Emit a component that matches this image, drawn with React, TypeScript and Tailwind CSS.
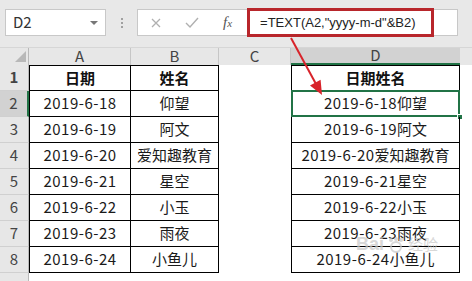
import React from 'react';

const rows: [string, string][] = [
  ['2019-6-18', '仰望'],
  ['2019-6-19', '阿文'],
  ['2019-6-20', '爱知趣教育'],
  ['2019-6-21', '星空'],
  ['2019-6-22', '小玉'],
  ['2019-6-23', '雨夜'],
  ['2019-6-24', '小鱼儿'],
];

const cellFont = { fontFamily: '"Noto Sans CJK SC", "Noto Sans", sans-serif' };
const uiFont = { fontFamily: '"Liberation Sans", Arial, sans-serif' };

function RowHeader({ n, selected }: { n: number; selected?: boolean }) {
  return (
    <div
      className={`flex w-[29px] shrink-0 items-center justify-center border-b border-[#d0d0d0] text-[15px] text-[#444] ${
        selected ? 'border-r-2 border-r-[#217346] bg-[#d2d2d2]' : 'border-r border-r-[#b9b9b9] bg-[#e7e7e7]'
      }`}
      style={cellFont}
    >
      {n}
    </div>
  );
}

export default function App() {
  return (
    <div className="relative h-[281px] w-[472px] overflow-hidden bg-white">
      {/* Name box + formula bar */}
      <div className="flex h-[47px] items-start bg-[#e8e8e8] pt-[9px]">
        <div className="ml-[5px] flex h-[27px] w-[101px] items-center justify-between border border-[#c8c8c8] bg-white pl-[7px] pr-[7px]">
          <span className="text-[15px] text-[#333]" style={cellFont}>D2</span>
          <svg width="8" height="4" viewBox="0 0 8 4">
            <path d="M0 0h8L4 4z" fill="#777" />
          </svg>
        </div>
        <div className="flex h-[27px] w-[31px] flex-col items-center justify-center gap-[2px]">
          <span className="h-[2px] w-[2px] bg-[#a0a0a0]" />
          <span className="h-[2px] w-[2px] bg-[#a0a0a0]" />
          <span className="h-[2px] w-[2px] bg-[#a0a0a0]" />
        </div>
        <div className="flex h-[27px] w-[321px] items-center border border-[#c8c8c8] bg-white">
          <svg className="ml-[13px]" width="10" height="10" viewBox="0 0 10 10">
            <path d="M1 1l8 8M9 1l-8 8" stroke="#b0b0b0" strokeWidth="1.3" />
          </svg>
          <svg className="ml-[24px]" width="14" height="11" viewBox="0 0 14 11">
            <path d="M1 6l4 4 8-9" stroke="#b0b0b0" strokeWidth="1.4" fill="none" />
          </svg>
          <span className="ml-[24px] text-[15px] italic text-[#555]" style={{ fontFamily: '"Liberation Serif", serif' }}>
            f<span className="text-[11px]">x</span>
          </span>
          <div className="ml-[15px] flex h-[29px] w-[187px] shrink-0 items-center border-[3px] border-[#b8262b] bg-white pl-[10px]">
            <span className="text-[13px] text-[#222]" style={uiFont}>
              =TEXT(A2,"yyyy-m-d"&amp;B2)
            </span>
          </div>
        </div>
      </div>

      {/* Column headers */}
      <div className="flex h-[18px] border-t border-[#d6d6d6] bg-[#e7e7e7] text-[15px] text-[#444]" style={cellFont}>
        <div className="relative w-[29px] shrink-0 border-r border-[#b9b9b9]">
          <svg className="absolute left-[15px] top-[3px]" width="11" height="11" viewBox="0 0 11 11">
            <path d="M11 0v11H0z" fill="#b8b8b8" />
          </svg>
        </div>
        <div className="flex w-[102px] items-center justify-center border-r border-[#c6c6c6]">A</div>
        <div className="flex w-[88px] items-center justify-center border-r border-[#c6c6c6]">B</div>
        <div className="flex w-[72px] items-center justify-center border-r border-[#c6c6c6]">C</div>
        <div className="flex w-[169px] items-center justify-center border-b-2 border-[#217346] bg-[#d2d2d2]">D</div>
        <div className="flex-1" />
      </div>

      {/* Row 1 */}
      <div className="flex h-[26px] text-[15px] font-bold text-[#111]" style={cellFont}>
        <RowHeader n={1} />
        <div className="flex w-[102px] items-center justify-center border-x border-y border-black">日期</div>
        <div className="flex w-[88px] items-center justify-center border-y border-r border-black">姓名</div>
        <div className="w-[72px]" />
        <div className="flex w-[169px] items-center justify-center border border-black">日期姓名</div>
        <div className="flex-1" />
      </div>

      {rows.map(([date, name], i) => (
        <div key={date} className="flex h-[26px] text-[15px] text-[#1a1a1a]" style={cellFont}>
          <RowHeader n={i + 2} selected={i === 0} />
          <div className="flex w-[102px] items-center justify-center border-x border-b border-black tracking-[0.5px]">
            {date}
          </div>
          <div className="flex w-[88px] items-center justify-center border-b border-r border-black">{name}</div>
          <div className="w-[72px]" />
          <div className="relative flex w-[169px] items-center justify-center border-x border-b border-black">
            <span className="tracking-[0.5px]">{date}</span>
            <span>{name}</span>
            {i === 0 && (
              <>
                <div className="absolute inset-[-1px] border-2 border-[#217346]" />
                <div className="absolute bottom-[-4px] right-[-4px] h-[6px] w-[6px] border border-white bg-[#217346]" />
              </>
            )}
          </div>
          <div className="flex-1" />
        </div>
      ))}

      <div className="flex h-[8px]">
        <div className="w-[29px] border-r border-[#b9b9b9] bg-[#e7e7e7]" />
        <div className="flex-1" />
      </div>

      {/* Watermark */}
      <div className="pointer-events-none absolute left-[356px] top-[231px] flex items-center gap-[3px] text-[#c8c8c8] opacity-70">
        <span className="text-[18px] font-bold" style={uiFont}>Bai</span>
        <svg width="18" height="18" viewBox="0 0 18 18">
          <circle cx="9" cy="11" r="5" fill="none" stroke="#c8c8c8" strokeWidth="2" />
          <circle cx="4" cy="4" r="2" fill="#c8c8c8" />
          <circle cx="9" cy="3" r="2" fill="#c8c8c8" />
          <circle cx="14" cy="4" r="2" fill="#c8c8c8" />
        </svg>
        <span className="text-[15px]" style={cellFont}>经验</span>
      </div>

      {/* Red arrow */}
      <svg className="pointer-events-none absolute left-0 top-0" width="472" height="281">
        <line x1="291" y1="38" x2="316" y2="84" stroke="#d8232a" strokeWidth="2" />
        <polygon points="322,95 310,85.6 320.6,79.8" fill="#d8232a" />
      </svg>
    </div>
  );
}
